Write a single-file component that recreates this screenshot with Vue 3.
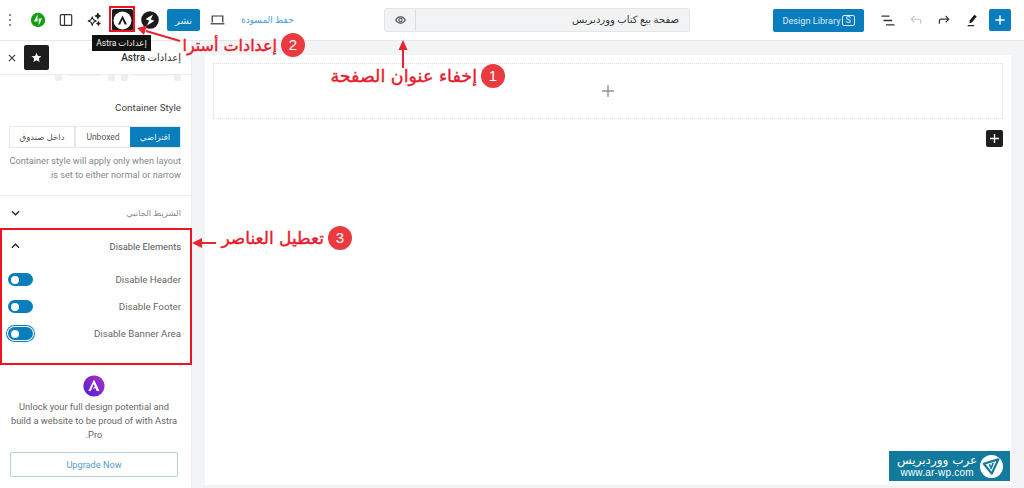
<script setup>
const toggles = [
  { label: 'Disable Header' },
  { label: 'Disable Footer' },
  { label: 'Disable Banner Area', focused: true },
]
</script>

<template>
  <div class="editor">
    <header class="topbar">
      <div class="topbar__left">
        <svg class="ico-dots" width="4" height="16" viewBox="0 0 4 16"><circle cx="2" cy="3" r="1" /><circle cx="2" cy="8" r="1" /><circle cx="2" cy="13" r="1" /></svg>
        <svg class="ico ico-jet" width="16" height="16" viewBox="0 0 16 16">
          <circle cx="8" cy="8" r="7.2" fill="#12a012" />
          <path d="M7.5 2.5v7H4zM8.7 13.5v-7H12z" fill="#fff" />
        </svg>
        <svg class="ico ico-panel" width="14" height="14" viewBox="0 0 14 14" fill="none" stroke="#333" stroke-width="1.2">
          <rect x="1.3" y="1.6" width="11.4" height="10.8" rx="1" />
          <path d="M5.5 1.6v10.8" />
        </svg>
        <svg class="ico ico-spark" width="16" height="16" viewBox="0 0 18 18" fill="none" stroke="#222" stroke-width="1.2" stroke-linejoin="round">
          <path d="M7 5.5l1.4 3.3 3.1 1.4-3.1 1.4L7 15l-1.4-3.4-3.1-1.4 3.1-1.4z" />
          <path d="M13.3 1.5l.9 2.1 2 .9-2 .9-.9 2.1-.9-2.1-2-.9 2-.9z" fill="#222" />
          <path d="M14 11l.6 1.3 1.3.6-1.3.6-.6 1.3-.6-1.3-1.3-.6 1.3-.6z" fill="#222" />
        </svg>
        <div class="astra-btn">
          <svg width="19" height="19" viewBox="0 0 19 19">
            <circle cx="9.5" cy="9.5" r="9" fill="#fff" />
            <path d="M9.6 4.6L14 13.6h-2.3L9.4 8.6 7.2 13.6H5z" fill="#1a1a1a" />
          </svg>
        </div>
        <svg class="ico ico-stack" width="18" height="18" viewBox="0 0 18 18">
          <circle cx="9" cy="9" r="8.8" fill="#1a1a1a" />
          <path d="M12 3.6L5.4 7.6q-.8.8.2 1.2l2.6.7-2.2 4.9 6.6-4q.8-.8-.2-1.2l-2.6-.7z" fill="#fff" />
        </svg>
        <button class="publish">نشر</button>
        <svg class="ico ico-laptop" width="15" height="10" viewBox="0 0 15 10" fill="none" stroke="#333" stroke-width="1.2">
          <path d="M2.2 7.4V1h10.6v6.4" />
          <path d="M.6 8.8h13.8" />
        </svg>
        <span class="draft">حفظ المسودة</span>
      </div>

      <div class="title-box">
        <span class="title-box__eye">
          <svg width="11" height="8" viewBox="0 0 14 10" fill="none" stroke="#444" stroke-width="1.3">
            <path d="M.8 5C2.4 2.4 4.6 1 7 1s4.6 1.4 6.2 4C11.6 7.6 9.4 9 7 9S2.4 7.6.8 5z" />
            <circle cx="7" cy="5" r="2.1" />
          </svg>
        </span>
        <span class="title-box__text">صفحة بيع كتاب ووردبريس</span>
      </div>

      <div class="topbar__right">
        <button class="library">Design Library<span class="library__s">S</span></button>
        <svg class="ico-list" width="14" height="11" viewBox="0 0 14 11" stroke="#333" stroke-width="1.3"><path d="M.5 1.2h8M2.5 5.5h8.5M5 9.8h8.5" /></svg>
        <svg class="ico-undo" width="12" height="10" viewBox="0 0 14 12" fill="none" stroke="#c4c4c4" stroke-width="1.3"><path d="M12.6 10.5V7.2Q12.6 5 10.4 5H1.5M5 1.2L1.3 5 5 8.8" /></svg>
        <svg class="ico-redo" width="12" height="10" viewBox="0 0 14 12" fill="none" stroke="#333" stroke-width="1.4"><path d="M1.4 10.5V7.2Q1.4 5 3.6 5h8.9M9 1.2L12.7 5 9 8.8" /></svg>
        <svg class="ico-pen" width="11" height="13" viewBox="0 0 13 15"><path d="M8.8.8l2.7 1.9-5.5 7-3 1 .1-3.2z" fill="#1a1a1a" /><path d="M.8 13.6h7.6" stroke="#1a1a1a" stroke-width="1.4" /></svg>
        <button class="add">
          <svg width="10" height="10" viewBox="0 0 12 12" stroke="#fff" stroke-width="1.7"><path d="M6 .5v11M.5 6h11" /></svg>
        </button>
      </div>
    </header>

    <div class="workspace">
      <aside class="sidebar" dir="rtl">
        <div class="sidebar__head">
          <span class="sidebar__title">إعدادات Astra</span>
          <div class="sidebar__tools">
            <button class="star">
              <svg width="11" height="11" viewBox="0 0 24 24"><path d="M12 1.5l3.2 7 7.6.8-5.7 5.1 1.6 7.5L12 18.1l-6.7 3.8 1.6-7.5L1.2 9.3l7.6-.8z" fill="#fff" /></svg>
            </button>
            <svg width="8" height="8" viewBox="0 0 9 9" stroke="#333" stroke-width="1.2"><path d="M1 1l7 7M8 1L1 8" /></svg>
          </div>
        </div>
        <div class="tabs-edge"><i /><b /><i /><i /><b /><i /></div>

        <section class="container-style">
          <h3 class="label">Container Style</h3>
          <div class="segment">
            <span class="segment__item segment__item--on">افتراضي</span>
            <span class="segment__item segment__item--mid">Unboxed</span>
            <span class="segment__item segment__item--wide">داخل صندوق</span>
          </div>
          <p class="hint">Container style will apply only when layout is set to either normal or narrow.</p>
        </section>

        <div class="panel-row">
          <span class="panel-row__name">الشريط الجانبي</span>
          <svg width="9" height="6" viewBox="0 0 10 6" fill="none" stroke="#222" stroke-width="1.4"><path d="M1 1l4 4 4-4" /></svg>
        </div>

        <section class="disable">
          <div class="disable__head">
            <span>Disable Elements</span>
            <svg width="9" height="6" viewBox="0 0 10 6" fill="none" stroke="#222" stroke-width="1.4"><path d="M1 5l4-4 4 4" /></svg>
          </div>
          <div v-for="t in toggles" :key="t.label" class="toggle-row">
            <span>{{ t.label }}</span>
            <span class="toggle" :class="{ 'toggle--focus': t.focused }"><i /></span>
          </div>
        </section>

        <section class="promo">
          <svg width="22" height="22" viewBox="0 0 22 22">
            <defs>
              <linearGradient id="astra-grad" x1="0" y1="1" x2="1" y2="0">
                <stop offset="0" stop-color="#4f1fd8" />
                <stop offset="1" stop-color="#b12fc4" />
              </linearGradient>
            </defs>
            <circle cx="11" cy="11" r="10.6" fill="url(#astra-grad)" />
            <path d="M11 4.5L16.5 16h-2.8l-1.2-2.8-3 .2 2.4-1.9L10.6 9 7.8 16H5.4z" fill="#fff" />
          </svg>
          <p>Unlock your full design potential and build a website to be proud of with Astra Pro.</p>
          <button class="upgrade">Upgrade Now</button>
        </section>
      </aside>

      <main class="canvas">
        <div class="page">
          <div class="block">
            <svg width="12" height="12" viewBox="0 0 12 12" stroke="#8b96a0" stroke-width="1.4"><path d="M6 0v12M0 6h12" /></svg>
          </div>
          <div class="page__add">
            <button class="block-add">
              <svg width="9" height="9" viewBox="0 0 10 10" stroke="#fff" stroke-width="1.5"><path d="M5 0v10M0 5h10" /></svg>
            </button>
          </div>
        </div>
      </main>
    </div>

    <!-- annotations over the screenshot -->
    <div class="tooltip" dir="rtl">إعدادات Astra</div>
    <div class="mark mark--box" />
    <div class="mark mark--astra" />
    <svg class="arrows" width="1024" height="488" viewBox="0 0 1024 488" fill="none" stroke="#e9232f" stroke-width="2">
      <path d="M403 68V48" />
      <path d="M403 40l-4.5 10h9z" fill="#e9232f" stroke="none" />
      <path d="M180 41L146 31" />
      <path d="M137 28l10-2.5-3 9.5z" fill="#e9232f" stroke="none" />
      <path d="M216 243h-16" />
      <path d="M192 243l10-5v10z" fill="#e9232f" stroke="none" />
    </svg>
    <div class="note note--1"><span class="note__num">1</span><span dir="rtl">إخفاء عنوان الصفحة</span></div>
    <div class="note note--2"><span class="note__num">2</span><span dir="rtl">إعدادات أسترا</span></div>
    <div class="note note--3"><span class="note__num">3</span><span dir="rtl">تعطيل العناصر</span></div>

    <div class="watermark">
      <div class="watermark__text">
        <span class="watermark__ar" dir="rtl">عرب ووردبريس</span>
        <span class="watermark__url">www.ar-wp.com</span>
      </div>
      <svg width="23" height="23" viewBox="0 0 23 23">
        <circle cx="11.5" cy="11.5" r="11.5" fill="#fff" />
        <path d="M3.8 8.8l14.6-4.4L11.8 18.6z" fill="none" stroke="#127a9c" stroke-width="2.2" stroke-linejoin="round" />
        <path d="M13.2 8l-2.4 6M9.6 9.2l.8 3" stroke="#127a9c" stroke-width="1.6" />
      </svg>
    </div>
  </div>
</template>

<style>
html,
body {
  margin: 0;
  background: #fff;
}
</style>

<style scoped>
.editor {
  position: relative;
  width: 1024px;
  height: 488px;
  overflow: hidden;
  font-family: Roboto, "DejaVu Sans", sans-serif;
  color: #333;
  background: #fff;
}
button {
  font-family: inherit;
  border: 0;
  padding: 0;
}
svg {
  display: block;
  flex: none;
}

/* top bar */
.topbar {
  display: flex;
  align-items: center;
  height: 40px;
  border-bottom: 1px solid #e6e7e9;
  box-sizing: content-box;
}
.topbar__left {
  display: flex;
  align-items: center;
  width: 384px;
  flex: none;
  padding-left: 8px;
  box-sizing: border-box;
}
.ico-dots {
  fill: #666;
}
.ico-jet {
  margin-left: 18px;
}
.ico-panel {
  margin-left: 13px;
}
.ico-spark {
  margin-left: 13px;
}
.astra-btn {
  display: flex;
  align-items: center;
  justify-content: center;
  width: 21px;
  height: 22px;
  margin-left: 10px;
  background: #1a1a1a;
  border-radius: 2px;
}
.ico-stack {
  margin-left: 8px;
}
.publish {
  width: 33px;
  height: 22px;
  margin-left: 8px;
  background: #0a7dbd;
  color: #dcecf6;
  font-size: 10px;
  border-radius: 2px;
}
.ico-laptop {
  margin-left: 10px;
}
.draft {
  margin-left: 16px;
  font-size: 9px;
  color: #4f9fd0;
  direction: rtl;
}
.title-box {
  display: flex;
  width: 306px;
  height: 24px;
  flex: none;
  background: #f2f3f5;
  border: 1px solid #e3e5e8;
  border-radius: 3px;
  box-sizing: border-box;
}
.title-box__eye {
  display: flex;
  align-items: center;
  justify-content: center;
  width: 30px;
  border-right: 1px solid #dcdfe2;
}
.title-box__text {
  flex: 1;
  padding-right: 10px;
  font-size: 10px;
  line-height: 21px;
  text-align: right;
  direction: rtl;
  color: #333;
}
.topbar__right {
  display: flex;
  align-items: center;
  flex: 1;
  padding-left: 83px;
}
.library {
  display: flex;
  align-items: center;
  justify-content: center;
  gap: 1px;
  width: 91px;
  height: 23px;
  background: #0a7dbd;
  color: #d8ebf6;
  font-size: 9.2px;
  border-radius: 2px;
}
.library__s {
  width: 11px;
  height: 9px;
  line-height: 9px;
  border: 1px solid #d8ebf6;
  border-radius: 2px;
  font-size: 9px;
}
.ico-list {
  margin-left: 17px;
}
.ico-undo {
  margin-left: 15px;
}
.ico-redo {
  margin-left: 16px;
}
.ico-pen {
  margin-left: 17px;
}
.add {
  display: flex;
  align-items: center;
  justify-content: center;
  width: 22px;
  height: 22px;
  margin-left: 11px;
  background: #0a7dbd;
  border-radius: 2px;
}

/* body */
.workspace {
  display: flex;
  height: 447px;
}
.sidebar {
  width: 192px;
  flex: none;
  border-right: 1px solid #eceef0;
  box-sizing: border-box;
  background: #fff;
}
.sidebar__head {
  display: flex;
  align-items: center;
  justify-content: space-between;
  height: 33px;
  padding: 0 10px 0 8px;
  border-bottom: 1px solid #eceef0;
}
.sidebar__title {
  font-size: 10px;
  font-weight: 500;
  color: #333;
}
.sidebar__tools {
  display: flex;
  align-items: center;
  gap: 8px;
}
.star {
  display: flex;
  align-items: center;
  justify-content: center;
  width: 25px;
  height: 25px;
  background: #1e1e1e;
  border-radius: 2px;
}
.tabs-edge {
  display: flex;
  gap: 6px;
  height: 6px;
  padding: 0 10px;
}
.tabs-edge i {
  width: 7px;
  height: 6px;
  background: #edeef0;
  border-radius: 0 0 2px 2px;
}
.tabs-edge b {
  width: 34px;
  height: 1px;
  background: #eff0f2;
}
.container-style {
  padding: 20px 10px 0 9px;
  height: 115px;
  box-sizing: border-box;
  border-bottom: 1px solid #eceef0;
}
.label {
  margin: 0;
  font-size: 9.8px;
  font-weight: 400;
  line-height: 14px;
  color: #444;
}
.segment {
  display: flex;
  height: 22px;
  margin-top: 11px;
  border: 1px solid #e6e8ea;
  box-sizing: border-box;
  font-size: 8.5px;
}
.segment__item {
  display: flex;
  align-items: center;
  justify-content: center;
  color: #555;
}
.segment__item--on {
  width: 50px;
  background: #0a7dbd;
  color: #e2f0f8;
}
.segment__item--mid {
  width: 54px;
  border-left: 1px solid #e6e8ea;
}
.segment__item--wide {
  flex: 1;
  border-right: 1px solid #e6e8ea;
}
.hint {
  margin: 6px 0 0;
  font-size: 9.2px;
  line-height: 13.5px;
  color: #85888d;
}
.panel-row {
  display: flex;
  align-items: center;
  justify-content: space-between;
  height: 33px;
  padding: 0 10px 0 11px;
}
.panel-row__name {
  font-size: 8.5px;
  color: #8a8d92;
}
.disable {
  height: 135px;
  padding: 0 10px 0 11px;
  box-sizing: border-box;
  font-size: 9.7px;
  color: #666;
}
.disable__head {
  display: flex;
  align-items: center;
  justify-content: space-between;
  height: 34px;
  margin-bottom: 3px;
  font-size: 9.3px;
  color: #555;
}
.toggle-row {
  display: flex;
  align-items: center;
  justify-content: space-between;
  height: 27px;
}
.toggle {
  position: relative;
  width: 25px;
  height: 13px;
  margin-left: -3px;
  background: #0a7dbd;
  border-radius: 7px;
}
.toggle i {
  position: absolute;
  top: 2.5px;
  left: 3px;
  width: 8px;
  height: 8px;
  background: #fff;
  border-radius: 50%;
}
.toggle--focus {
  box-shadow: 0 0 0 1px #fff, 0 0 0 2px #0a7dbd;
}
.promo {
  display: flex;
  flex-direction: column;
  align-items: center;
  padding: 11px 13px 0 10px;
  text-align: center;
}
.promo p {
  margin: 3px 0 0;
  font-size: 9.3px;
  line-height: 14px;
  color: #666;
}
.upgrade {
  width: 168px;
  height: 25px;
  margin-top: 10px;
  background: #fff;
  border: 1px solid #b5cfe6;
  border-radius: 2px;
  color: #5c9bc9;
  font-size: 9.2px;
}

/* canvas */
.canvas {
  flex: 1;
  padding: 14px 13px 3px;
  background: #f3f4f6;
}
.page {
  height: 100%;
  padding: 8px 8px 0;
  background: #fff;
  box-sizing: border-box;
}
.block {
  display: flex;
  align-items: center;
  justify-content: center;
  height: 56px;
  border: 1px dotted #dcdde0;
  box-sizing: border-box;
}
.page__add {
  display: flex;
  justify-content: flex-end;
  margin-top: 11px;
}
.block-add {
  display: flex;
  align-items: center;
  justify-content: center;
  width: 17px;
  height: 17px;
  background: #1e1e1e;
  border-radius: 2px;
}

/* annotations */
.tooltip {
  position: absolute;
  top: 35px;
  left: 92px;
  width: 59px;
  height: 16px;
  background: #111;
  color: #eee;
  font-size: 8.5px;
  line-height: 16px;
  text-align: center;
}
.mark {
  position: absolute;
  box-sizing: border-box;
  border: 2px solid #ee1422;
}
.mark--astra {
  top: 6px;
  left: 109px;
  width: 26px;
  height: 26px;
}
.mark--box {
  top: 228px;
  left: 0;
  width: 192px;
  height: 137px;
}
.arrows {
  position: absolute;
  top: 0;
  left: 0;
}
.note {
  position: absolute;
  display: flex;
  flex-direction: row-reverse;
  align-items: center;
  gap: 4px;
  height: 24px;
  font-family: "DejaVu Sans", sans-serif;
  font-size: 17.5px;
  font-weight: 400;
  color: #e8192c;
  -webkit-text-stroke: 0.4px #e8192c;
  white-space: nowrap;
}
.note__num {
  width: 24px;
  height: 24px;
  background: #ea3a3f;
  border-radius: 50%;
  color: #fff;
  font-family: "Liberation Sans", sans-serif;
  font-size: 15px;
  font-weight: 400;
  line-height: 24px;
  text-align: center;
  -webkit-text-stroke: 0;
}
.note--1 {
  top: 64px;
  right: 519px;
}
.note--2 {
  top: 33px;
  right: 719px;
  font-size: 16px;
}
.note--3 {
  top: 226px;
  right: 672px;
  font-size: 17px;
}
.watermark {
  position: absolute;
  top: 451px;
  left: 889px;
  display: flex;
  align-items: center;
  justify-content: space-between;
  width: 121px;
  height: 30px;
  padding: 0 7px 0 8px;
  box-sizing: border-box;
  background: #127a9c;
  color: #fff;
}
.watermark__text {
  display: flex;
  flex-direction: column;
  align-items: center;
}
.watermark__ar {
  font-family: "DejaVu Sans", sans-serif;
  font-size: 12px;
  line-height: 13px;
}
.watermark__url {
  font-family: "Liberation Sans", sans-serif;
  font-size: 10px;
  line-height: 11px;
  letter-spacing: 0.2px;
}
</style>
